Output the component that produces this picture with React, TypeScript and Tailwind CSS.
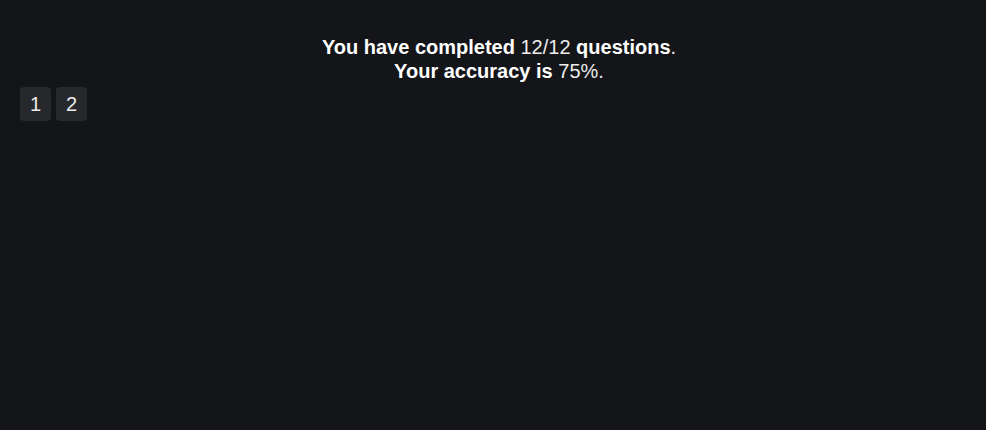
export default function App() {
  const pages = [1, 2];

  return (
    <div className="min-h-[430px] bg-[#141519] font-['Liberation_Sans',Arial,sans-serif] text-white">
      {/* Summary */}
      <div className="pl-3 pt-[35px] text-center text-[20px] leading-[24px]">
        <p>
          <span className="font-bold">You have completed</span>{" "}
          <span className="text-[#ececec]">12/12</span>{" "}
          <span className="font-bold">questions</span>
          <span className="text-[#ececec]">.</span>
        </p>
        <p>
          <span className="font-bold">Your accuracy is</span>{" "}
          <span className="text-[#ececec]">75%</span>
          <span className="text-[#ececec]">.</span>
        </p>
      </div>

      {/* Pagination */}
      <div className="mt-[4px] flex gap-[5px] px-5">
        {pages.map((n) => (
          <button
            key={n}
            type="button"
            className="flex h-[34px] w-[31px] items-center justify-center rounded-[4px] bg-[#27282c] text-[20px] text-[#ececec]"
          >
            {n}
          </button>
        ))}
      </div>
    </div>
  );
}
